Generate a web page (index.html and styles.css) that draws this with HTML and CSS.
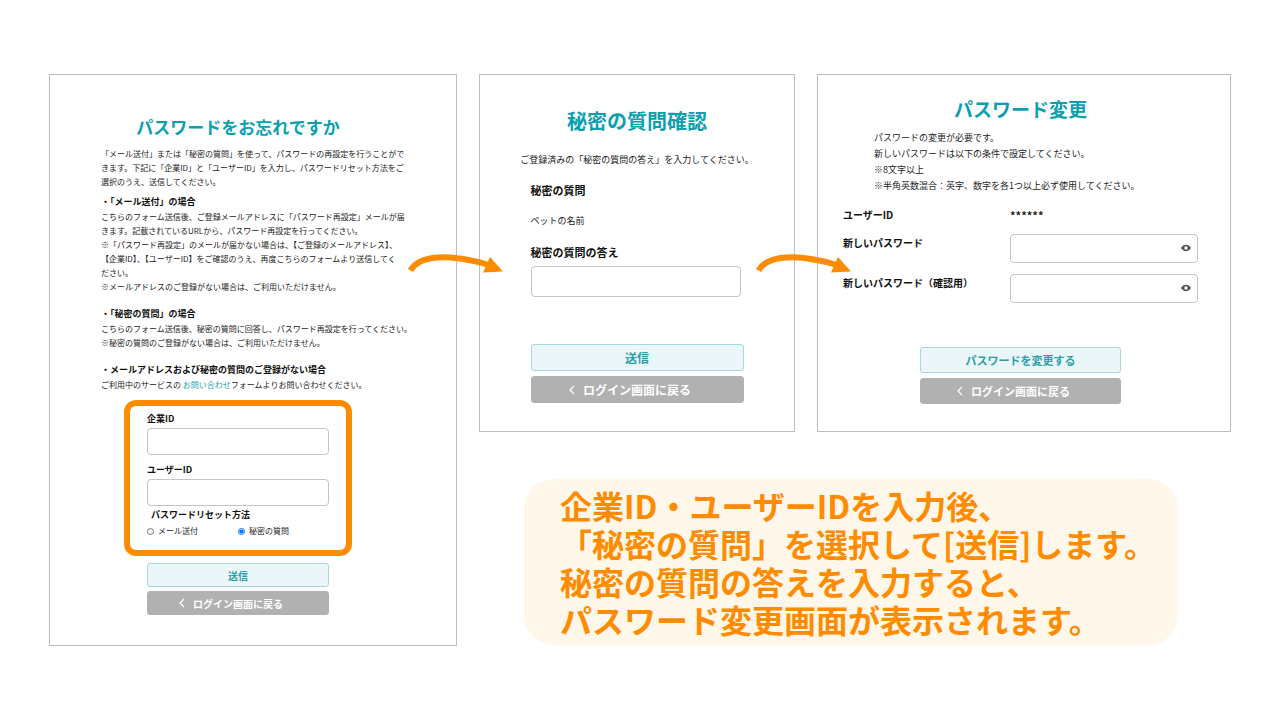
FILE: index.html
```html
<!DOCTYPE html>
<html lang="ja">
 <head>
  <meta charset="UTF-8" />
  <meta name="viewport" content="width=device-width, initial-scale=1.0" />
  <title>パスワードをお忘れですか</title>
  <link rel="stylesheet" href="styles.css">
 </head>
 <body>
  <main class="steps">
   <!-- step 1 -->
   <section class="panel panel-forgot">
    <h1 class="title">パスワードをお忘れですか</h1>
    <p class="text">「メール送付」または「秘密の質問」を使って、パスワードの再設定を行うことがで<br>きます。下記に「企業ID」と「ユーザーID」を入力し、パスワードリセット方法をご<br>選択のうえ、送信してください。</p>
    <h2 class="case first">・「メール送付」の場合</h2>
    <p class="text">こちらのフォーム送信後、ご登録メールアドレスに「パスワード再設定」メールが届<br>きます。記載されているURLから、パスワード再設定を行ってください。<br>※「パスワード再設定」のメールが届かない場合は、【ご登録のメールアドレス】、<br>【企業ID】、【ユーザーID】をご確認のうえ、再度こちらのフォームより送信してく<br>ださい。<br>※メールアドレスのご登録がない場合は、ご利用いただけません。</p>
    <h2 class="case">・「秘密の質問」の場合</h2>
    <p class="text">こちらのフォーム送信後、秘密の質問に回答し、パスワード再設定を行ってください。<br>※秘密の質問のご登録がない場合は、ご利用いただけません。</p>
    <h2 class="case">・メールアドレスおよび秘密の質問のご登録がない場合</h2>
    <p class="text">ご利用中のサービスの <a href="#">お問い合わせ</a>フォームよりお問い合わせください。</p>
    <form>
     <div class="highlight">
      <label class="label" for="company">企業ID</label>
      <input class="input" type="text" id="company" />
      <label class="label next" for="user">ユーザーID</label>
      <input class="input" type="text" id="user" />
      <fieldset class="method">
       <legend>パスワードリセット方法</legend>
       <div class="radios">
        <label><input type="radio" name="method" />メール送付</label>
        <label><input type="radio" name="method" checked />秘密の質問</label>
       </div>
      </fieldset>
     </div>
     <div class="buttons">
      <button class="btn btn-send" type="button">送信</button>
      <button class="btn btn-back" type="button">
       <svg class="chevron" viewBox="0 0 6 10"><path d="M5 1 1 5l4 4" /></svg>ログイン画面に戻る
      </button>
     </div>
    </form>
    <svg class="arrow" viewBox="0 0 98 30">
     <path class="shaft" d="M3.500 20.500C12 5 42 3 82 15" />
     <path class="head" d="M83 7 96 21.500 76 22.500Z" />
    </svg>
   </section>

   <!-- step 2 -->
   <section class="panel panel-question">
    <h1 class="title">秘密の質問確認</h1>
    <p class="text">ご登録済みの「秘密の質問の答え」を入力してください。</p>
    <form>
     <h2 class="label">秘密の質問</h2>
     <p class="text question">ペットの名前</p>
     <label class="label" for="answer">秘密の質問の答え</label>
     <input class="input" type="text" id="answer" />
     <div class="buttons">
      <button class="btn btn-send" type="button">送信</button>
      <button class="btn btn-back" type="button">
       <svg class="chevron" viewBox="0 0 6 10"><path d="M5 1 1 5l4 4" /></svg>ログイン画面に戻る
      </button>
     </div>
    </form>
    <svg class="arrow" viewBox="0 0 98 30">
     <path class="shaft" d="M3.500 20.500C12 5 42 3 82 15" />
     <path class="head" d="M83 7 96 21.500 76 22.500Z" />
    </svg>
   </section>

   <!-- step 3 -->
   <section class="panel panel-change">
    <h1 class="title">パスワード変更</h1>
    <p class="text">パスワードの変更が必要です。<br>新しいパスワードは以下の条件で設定してください。<br>※8文字以上<br>※半角英数混合：英字、数字を各1つ以上必ず使用してください。</p>
    <form>
     <div class="row">
      <span class="label">ユーザーID</span>
      <span class="value">******</span>
     </div>
     <div class="row">
      <label class="label" for="password">新しいパスワード</label>
      <div class="field">
       <input class="input" type="password" id="password" />
       <button class="eye" type="button" aria-label="パスワードを表示">
        <svg viewBox="0 0 12 8"><path d="M1 4C3.500-.2 8.500-.2 11 4 8.500 8.200 3.500 8.200 1 4Z" /><circle cx="6" cy="4" r="1.700" /></svg>
       </button>
      </div>
     </div>
     <div class="row">
      <label class="label" for="confirm">新しいパスワード（確認用）</label>
      <div class="field">
       <input class="input" type="password" id="confirm" />
       <button class="eye" type="button" aria-label="パスワードを表示">
        <svg viewBox="0 0 12 8"><path d="M1 4C3.500-.2 8.500-.2 11 4 8.500 8.200 3.500 8.200 1 4Z" /><circle cx="6" cy="4" r="1.700" /></svg>
       </button>
      </div>
     </div>
     <div class="buttons">
      <button class="btn btn-send" type="button">パスワードを変更する</button>
      <button class="btn btn-back" type="button">
       <svg class="chevron" viewBox="0 0 6 10"><path d="M5 1 1 5l4 4" /></svg>ログイン画面に戻る
      </button>
     </div>
    </form>
   </section>

   <p class="callout">企業ID・ユーザーIDを入力後、<br>「秘密の質問」を選択して[送信]します。<br>秘密の質問の答えを入力すると、<br>パスワード変更画面が表示されます。</p>
  </main>
 </body>
</html>
```
FILE: styles.css
```css
* {
 box-sizing: border-box;
}
body {
 margin: 0;
 background-color: #fff;
 color: #222;
 font-family: "Noto Sans CJK JP", sans-serif;
}
h1, h2, p {
 margin: 0;
}
.steps {
 display: grid;
 grid-template-columns: minmax(0, 408fr) minmax(0, 316fr) minmax(0, 414fr);
 column-gap: 22px;
 row-gap: 46px;
 align-items: start;
 padding: 74px 49px;
}
.panel {
 position: relative;
 border: 1px solid #bfbfbf;
 white-space: nowrap;
}
.title {
 color: #0b9fb0;
 font-weight: 700;
 line-height: 28px;
 text-align: center;
}
.text {
 font-size: 9px;
 line-height: 16px;
}
.text a {
 color: #1ba3b3;
 text-decoration: none;
}
.label {
 display: block;
 color: #111;
 font-weight: 700;
 line-height: 16px;
}
.input {
 display: block;
 width: 100%;
 padding: 0 8px;
 border: 1px solid #c4c4c4;
 border-radius: 4px;
 background-color: #fff;
}
.buttons {
 display: flex;
 flex-direction: column;
 gap: 5px;
 margin: 0 auto;
}
.btn {
 display: flex;
 align-items: center;
 justify-content: center;
 padding: 0;
 border: 1px solid #a5d8dd;
 border-radius: 3px;
 font-family: inherit;
 font-weight: 700;
}
.btn-send {
 background-color: #eaf6f7;
 color: #2a9fab;
}
.btn-back {
 padding-right: 14px;
 border-color: #b1b1b1;
 background-color: #b1b1b1;
 color: #fff;
}
.chevron {
 width: 6px;
 height: 10px;
 margin-right: 8px;
 fill: none;
 stroke: #fff;
 stroke-width: 1.2;
}
.arrow {
 position: absolute;
 z-index: 1;
 top: 175px;
 width: 98px;
 height: 30px;
}
.shaft {
 fill: none;
 stroke: #ff8c00;
 stroke-width: 6;
}
.head {
 fill: #ff8c00;
}

/* step 1 */
.panel-forgot {
 grid-row: span 2;
 padding: 38px 81px 30px 51px;
}
.panel-forgot .title {
 margin-bottom: 6px;
 font-size: 17px;
}
.panel-forgot .text {
 font-size: 8px;
 line-height: 14px;
}
.case {
 margin-top: 12px;
 color: #111;
 font-size: 9px;
 line-height: 16px;
}
.case.first {
 margin-top: 5px;
}
.highlight {
 width: 228px;
 margin: 8px auto 7px;
 padding: 5px 17px 11px;
 border: 6px solid #ff8c00;
 border-radius: 12px;
}
.highlight .label,
.method legend {
 font-size: 9px;
}
.highlight .label.next {
 margin-top: 7px;
}
.highlight .input {
 height: 27px;
 margin-top: 1px;
}
.method {
 margin: 1px 0 0;
 padding: 0;
 border: 0;
}
.method legend {
 padding: 0 4px;
 color: #111;
 font-weight: 700;
 line-height: 16px;
}
.radios {
 display: grid;
 grid-template-columns: 1fr 1fr;
}
.radios label {
 display: flex;
 align-items: center;
 gap: 4px;
 font-size: 8px;
 line-height: 16px;
}
.radios input {
 width: 7px;
 height: 7px;
 margin: 0;
}
.panel-forgot .buttons {
 gap: 4px;
 width: 182px;
}
.panel-forgot .btn {
 height: 24px;
 font-size: 10px;
}
.panel-forgot .arrow {
 right: -49px;
}

/* step 2 */
.panel-question {
 padding: 32px 36px 28px;
}
.panel-question .title {
 margin-bottom: 17px;
 font-size: 20px;
}
.panel-question > .text {
 text-align: center;
}
.panel-question form {
 width: 213px;
 margin: 14px auto 0;
}
.panel-question .label {
 font-size: 11px;
}
.question {
 margin: 15px 0;
}
.panel-question .input {
 width: 210px;
 height: 31px;
 margin: 6px 0 47px;
}
.panel-question .btn {
 height: 27px;
 font-size: 12px;
}
.panel-question .arrow {
 right: -59px;
}

/* step 3 */
.panel-change {
 padding: 20px 32px 27px 25px;
}
.panel-change .title {
 margin-bottom: 7px;
 font-size: 19px;
}
.panel-change > .text {
 margin: 0 0 13px 31px;
}
.row {
 display: grid;
 grid-template-columns: 167px 1fr;
 align-items: start;
 margin-bottom: 11px;
}
.row .label {
 font-size: 10px;
}
.row label {
 padding-top: 1px;
}
.value {
 font-size: 11px;
 font-weight: 700;
 line-height: 16px;
}
.field {
 position: relative;
}
.field .input {
 height: 29px;
 padding-right: 24px;
}
.eye {
 position: absolute;
 top: 7px;
 right: 6px;
 display: flex;
 padding: 3px 0;
 border: 0;
 background: none;
}
.eye svg {
 width: 12px;
 height: 8px;
 fill: #555;
}
.eye circle {
 fill: #fff;
}
.panel-change .buttons {
 width: 201px;
 margin-top: 44px;
}
.panel-change .btn {
 height: 26px;
 font-size: 11px;
}

.callout {
 grid-column: 2 / 4;
 margin: 0 53px 0 45px;
 padding: 7px 36px;
 border-radius: 30px;
 background-color: #fff7ea;
 color: #ff8c00;
 font-size: 32px;
 font-weight: 700;
 line-height: 38px;
 white-space: nowrap;
}
```
